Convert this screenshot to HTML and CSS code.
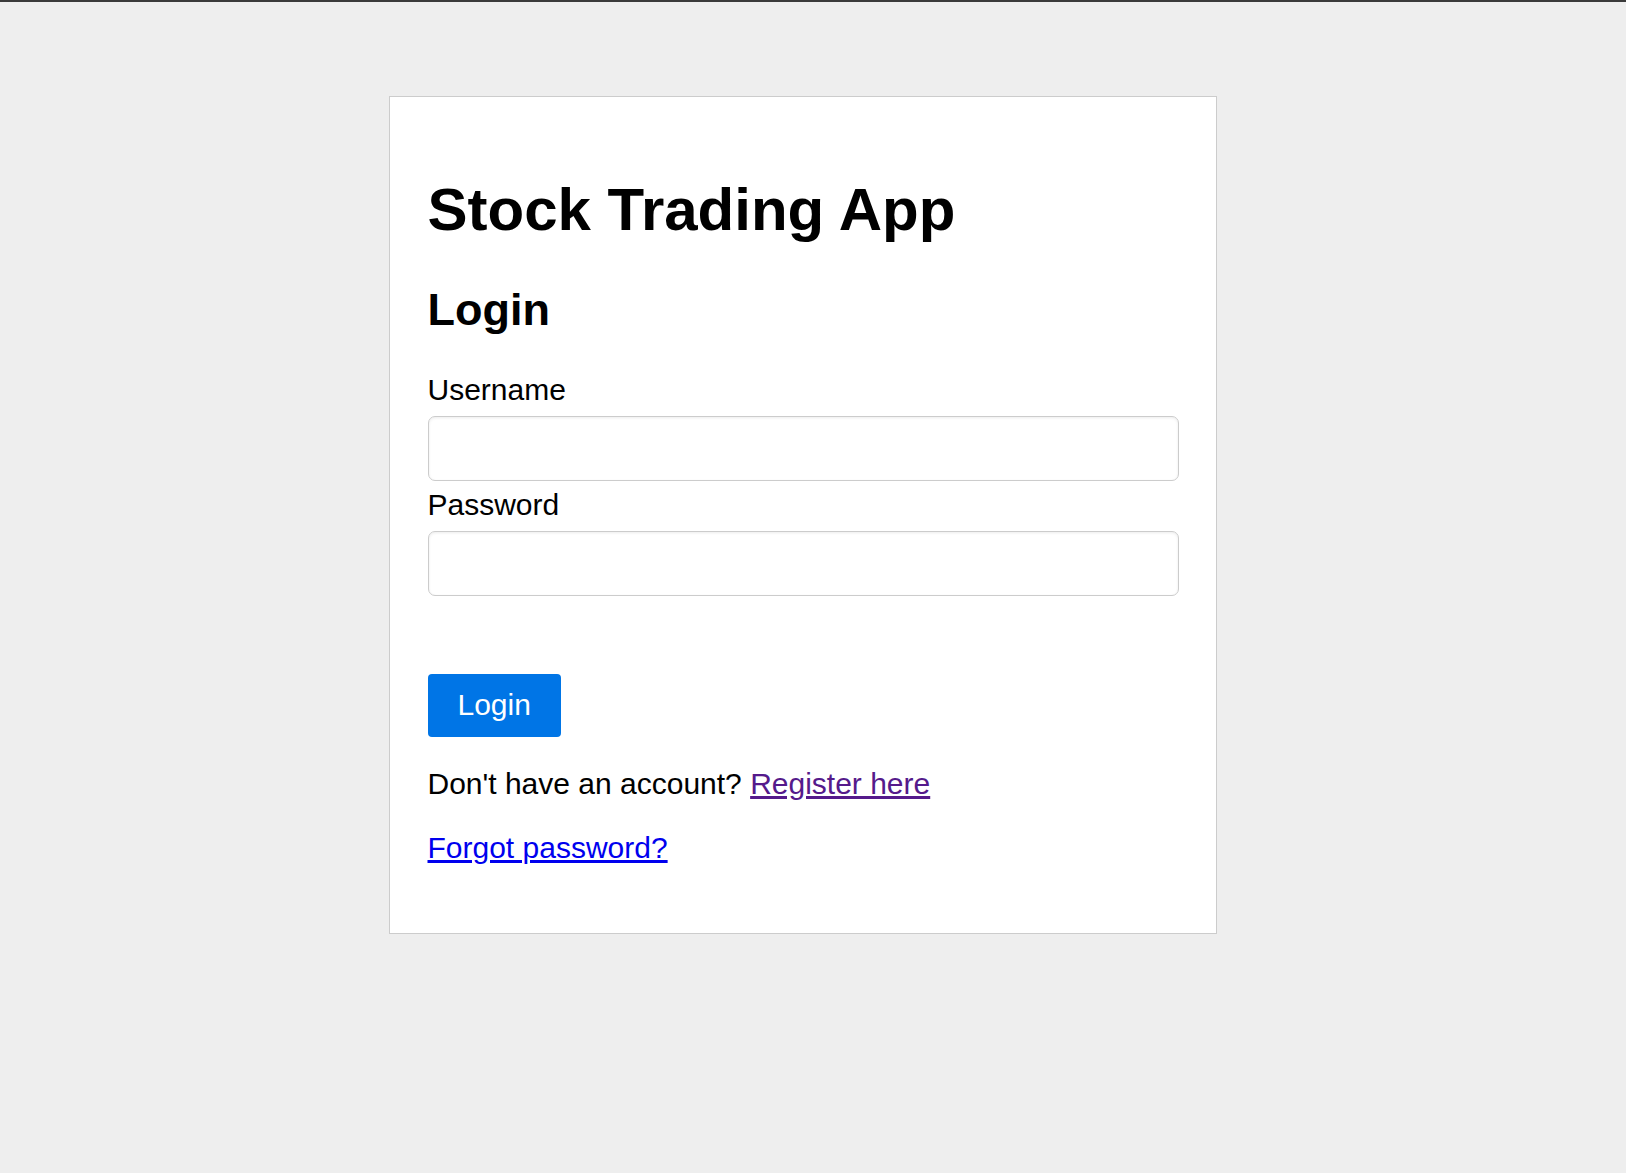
FILE: index.html
```html
<!DOCTYPE html>
<html lang="en">
<head>
<meta charset="utf-8">
<title>Stock Trading App</title>
<link rel="stylesheet" href="styles.css">
</head>
<body>
<div class="topline"></div>
<div class="page">
  <div class="card">
    <h1 class="title">Stock Trading App</h1>
    <h2 class="subtitle">Login</h2>
    <form class="form">
      <label class="label" for="username">Username</label>
      <input class="input" id="username" type="text">
      <label class="label" for="password">Password</label>
      <input class="input" id="password" type="password">
      <button class="btn" type="button">Login</button>
    </form>
    <p class="line">Don't have an account? <a class="link visited" href="#register">Register here</a></p>
    <p class="line"><a class="link" href="#forgot">Forgot password?</a></p>
  </div>
</div>
</body>
</html>
```
FILE: styles.css
```css
html, body {
  margin: 0;
  padding: 0;
}
body {
  background: #eeeeee;
  font-family: "Liberation Sans", Arial, sans-serif;
  font-size: 30px;
  line-height: 34.5px;
  color: #000;
  min-height: 1173px;
}
.topline {
  height: 2px;
  background: #3a3a3a;
}
.page {
  padding: 94px 20px 0 0;
}
.card {
  box-sizing: border-box;
  width: 828px;
  margin: 0 auto;
  background: #fff;
  border: 1px solid #cccccc;
  padding: 37.5px;
}
.title {
  font-size: 60px;
  line-height: 69px;
  font-weight: bold;
  margin: 40.2px 0;
}
.subtitle {
  font-size: 45px;
  line-height: 51.75px;
  font-weight: bold;
  margin: 40.2px 0 37.35px;
}
.form {
  margin: 0;
}
.label {
  display: block;
  margin-bottom: 8.25px;
}
.input {
  display: block;
  box-sizing: border-box;
  width: 100%;
  height: 65px;
  margin: 0 0 7.5px;
  border: 1px solid #cccccc;
  border-radius: 7px;
  background: #fff;
  box-shadow: inset 0 1px 3px rgba(0, 0, 0, 0.08);
  font-family: inherit;
  font-size: 30px;
  padding: 0 15px;
}
.btn {
  display: block;
  margin-top: 78px;
  padding: 14.25px 30px;
  border: none;
  border-radius: 4px;
  background: #0075e6;
  color: #fff;
  font-family: inherit;
  font-size: 30px;
  line-height: 34.5px;
}
.line {
  margin: 30px 0;
}
.link {
  color: #0000ee;
  text-decoration: underline;
}
.link.visited {
  color: #551a8b;
}
```
